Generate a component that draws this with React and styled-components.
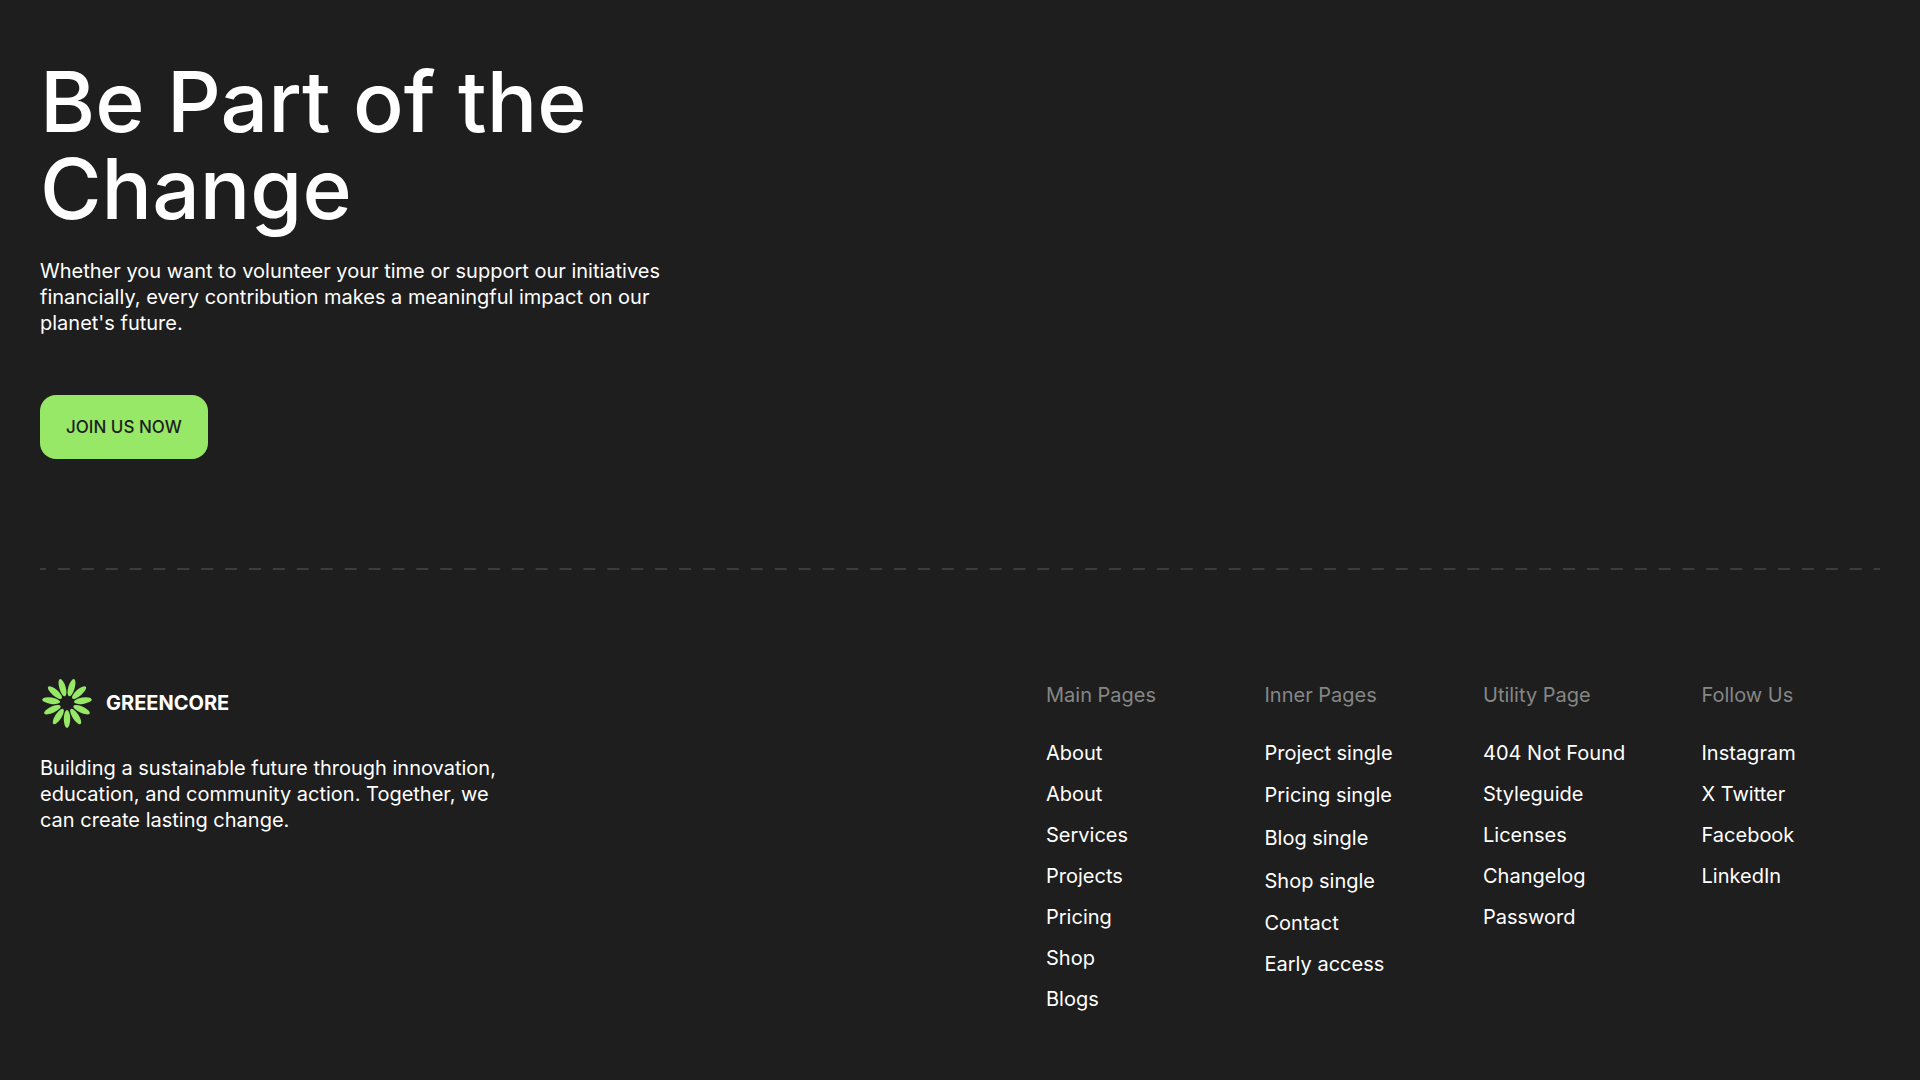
import React from "react";
import styled, { createGlobalStyle } from "styled-components";

const columns = [
  {
    title: "Main Pages",
    links: [
      { name: "About" },
      { name: "About" },
      { name: "Services" },
      { name: "Projects" },
      { name: "Pricing" },
      { name: "Shop" },
      { name: "Blogs" }
    ]
  },
  {
    title: "Inner Pages",
    links: [
      { name: "Project single" },
      { name: "Pricing single", tall: true },
      { name: "Blog single", tall: true },
      { name: "Shop single", tall: true },
      { name: "Contact" },
      { name: "Early access" }
    ]
  },
  {
    title: "Utility Page",
    links: [
      { name: "404 Not Found" },
      { name: "Styleguide" },
      { name: "Licenses" },
      { name: "Changelog" },
      { name: "Password" }
    ]
  },
  {
    title: "Follow Us",
    links: [
      { name: "Instagram" },
      { name: "X Twitter" },
      { name: "Facebook" },
      { name: "LinkedIn" }
    ]
  }
];

const petals = Array.from({ length: 11 }, (_, i) => (i * 360) / 11);

const Flower = () => (
  <svg width="50" height="50" viewBox="-25 -25 50 50" aria-hidden="true">
    {petals.map(angle => (
      <ellipse
        key={angle}
        cy="16"
        rx="3.2"
        ry="9"
        fill="#97e866"
        transform={`rotate(${angle})`}
      />
    ))}
  </svg>
);

const App = () => {
  return (
    <PageStyled>
      <GlobalStyle />
      <HeroStyled>
        <TitleStyled>Be Part of the Change</TitleStyled>
        <TextStyled $width={640}>
          Whether you want to volunteer your time or support our initiatives
          financially, every contribution makes a meaningful impact on our
          planet's future.
        </TextStyled>
        <ButtonStyled type="button">JOIN US NOW</ButtonStyled>
      </HeroStyled>
      <DividerStyled />
      <FooterStyled>
        <BrandStyled>
          <LogoStyled href="#">
            <Flower />
            GREENCORE
          </LogoStyled>
          <TextStyled $width={480}>
            Building a sustainable future through innovation, education, and
            community action. Together, we can create lasting change.
          </TextStyled>
        </BrandStyled>
        <NavStyled>
          {columns.map(({ title, links }) => (
            <div key={title}>
              <ColumnTitleStyled>{title}</ColumnTitleStyled>
              <ListStyled>
                {links.map((link, key) => (
                  <ItemStyled key={key} $tall={link.tall}>
                    <a href="#">{link.name}</a>
                  </ItemStyled>
                ))}
              </ListStyled>
            </div>
          ))}
        </NavStyled>
      </FooterStyled>
    </PageStyled>
  );
};

export default App;

// styled
const GlobalStyle = createGlobalStyle`
  * {
    box-sizing: border-box;
  }

  body {
    margin: 0;
    background-color: #1e1e1e;
    color: #fff;
    font-family: Inter, "Liberation Sans", sans-serif;
    font-size: 20px;
    line-height: 26px;
  }

  a {
    color: inherit;
    text-decoration: none;
  }
`;

const PageStyled = styled.main`
  padding: 58px 40px 64px;
`;

const HeroStyled = styled.section`
  display: flex;
  flex-direction: column;
  align-items: flex-start;
`;

const TitleStyled = styled.h1`
  max-width: 640px;
  margin: 0 0 26px;
  font-size: 84px;
  font-weight: 500;
  line-height: 87px;
`;

const TextStyled = styled.p`
  max-width: ${props => props.$width}px;
  margin: 0;
`;

const ButtonStyled = styled.button`
  height: 64px;
  margin-top: 59px;
  padding: 0 26px;
  border: none;
  border-radius: 16px;
  background-color: #97e866;
  color: #1e1e1e;
  font-family: inherit;
  font-size: 17px;
  font-weight: 500;
  cursor: pointer;
`;

/* each tile is half a dash, a gap and half a dash */
const DividerStyled = styled.hr`
  height: 2px;
  margin: 109px 0 108px;
  border: none;
  background-image: linear-gradient(
    to right,
    #3c3c3c 25%,
    transparent 25%,
    transparent 75%,
    #3c3c3c 75%
  );
  background-size: 24px 2px;
  background-repeat: round;
`;

const FooterStyled = styled.footer`
  display: flex;
  justify-content: space-between;
  gap: 40px;
`;

const BrandStyled = styled.div`
  display: flex;
  flex-direction: column;
  align-items: flex-start;
  gap: 27px;
`;

const LogoStyled = styled.a`
  display: flex;
  align-items: center;
  gap: 14px;
  padding-left: 2px;
  font-weight: 700;
`;

const NavStyled = styled.nav`
  display: grid;
  grid-template-columns: repeat(4, 1fr);
  gap: 40px;
  flex: 0 1 834px;
  padding-top: 4px;
`;

const ColumnTitleStyled = styled.h2`
  margin: 0 0 32px;
  color: #868686;
  font-size: 20px;
  font-weight: 400;
`;

const ListStyled = styled.ul`
  display: flex;
  flex-direction: column;
  gap: 15px;
  margin: 0;
  padding: 0;
  list-style: none;
`;

const ItemStyled = styled.li`
  line-height: ${props => (props.$tall ? 28 : 26)}px;
`;
